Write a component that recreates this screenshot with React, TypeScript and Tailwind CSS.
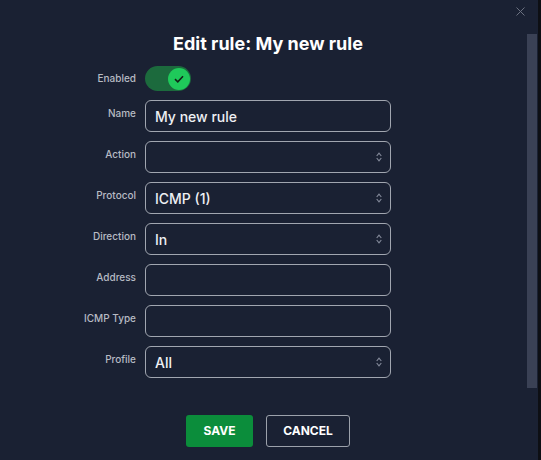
import React from "react";

const fields: { label: string; value?: string; select?: boolean }[] = [
  { label: "Name", value: "My new rule" },
  { label: "Action", select: true },
  { label: "Protocol", value: "ICMP (1)", select: true },
  { label: "Direction", value: "In", select: true },
  { label: "Address" },
  { label: "ICMP Type" },
  { label: "Profile", value: "All", select: true },
];

function UpDown() {
  return (
    <svg width="6" height="10" viewBox="0 0 6 10" fill="none" stroke="#858b9b" strokeWidth="1.1">
      <path d="M0.7 4 L3 1.1 L5.3 4" />
      <path d="M0.7 6 L3 8.9 L5.3 6" />
    </svg>
  );
}

export default function App() {
  return (
    <div className="flex w-[541px] h-[460px] bg-[#0d0f14]" style={{ fontFamily: "Inter, 'Noto Sans', sans-serif" }}>
      <div className="relative w-[538px] h-full bg-[#1a2133] overflow-hidden">
        {/* close */}
        <svg className="absolute left-[516px] top-[7px]" width="9" height="9" viewBox="0 0 9 9" stroke="#6b7180" strokeWidth="1">
          <path d="M0.5 0.5 L8.5 8.5 M8.5 0.5 L0.5 8.5" />
        </svg>
        {/* scrollbar */}
        <div className="absolute left-[527px] top-[34px] w-[10px] h-[354px] bg-[#3a4155]" />

        <div className="pt-[30px] pr-[2px]">
          <h1 className="text-center text-[18px] leading-[27px] font-bold text-white">Edit rule: My new rule</h1>

          <div className="mt-[9px] flex flex-col gap-[9px] ml-[46px]">
            <div className="flex items-center gap-[9px] h-[25px]">
              <span className="w-[90px] text-right text-[10px] leading-[15px] font-medium text-[#b7bbc4] -mt-[1px]">Enabled</span>
              <div className="w-[46px] h-[25px] rounded-full bg-[#1c6a3d] flex items-center justify-end pr-[1px]">
                <div className="w-[22px] h-[22px] rounded-full bg-[#1fc95a] flex items-center justify-center">
                  <svg width="10" height="8" viewBox="0 0 10 8" fill="none" stroke="#132018" strokeWidth="1.6">
                    <path d="M1 4.2 L3.8 6.8 L9 1.2" />
                  </svg>
                </div>
              </div>
            </div>

            {fields.map((f) => (
              <div key={f.label} className="flex items-start gap-[9px]">
                <span className="w-[90px] text-right text-[10px] leading-[15px] font-medium text-[#b7bbc4] pt-[6px]">{f.label}</span>
                <div className="w-[246px] h-[32px] rounded-[6px] border border-[#a1a6b0] flex items-center justify-between pl-[9px] pr-[8px]">
                  <span className="text-[14px] font-medium text-[#eef0f3]">{f.value ?? ""}</span>
                  {f.select && <UpDown />}
                </div>
              </div>
            ))}
          </div>

          <div className="mt-[37px] flex justify-center gap-[13px]">
            <button className="w-[67px] h-[32px] rounded-[3px] bg-[#0b8d3b] text-white text-[12px] font-bold">SAVE</button>
            <button className="w-[84px] h-[32px] rounded-[3px] border border-[#9ca1ab] text-white text-[12px] font-bold">CANCEL</button>
          </div>
        </div>
      </div>
    </div>
  );
}
